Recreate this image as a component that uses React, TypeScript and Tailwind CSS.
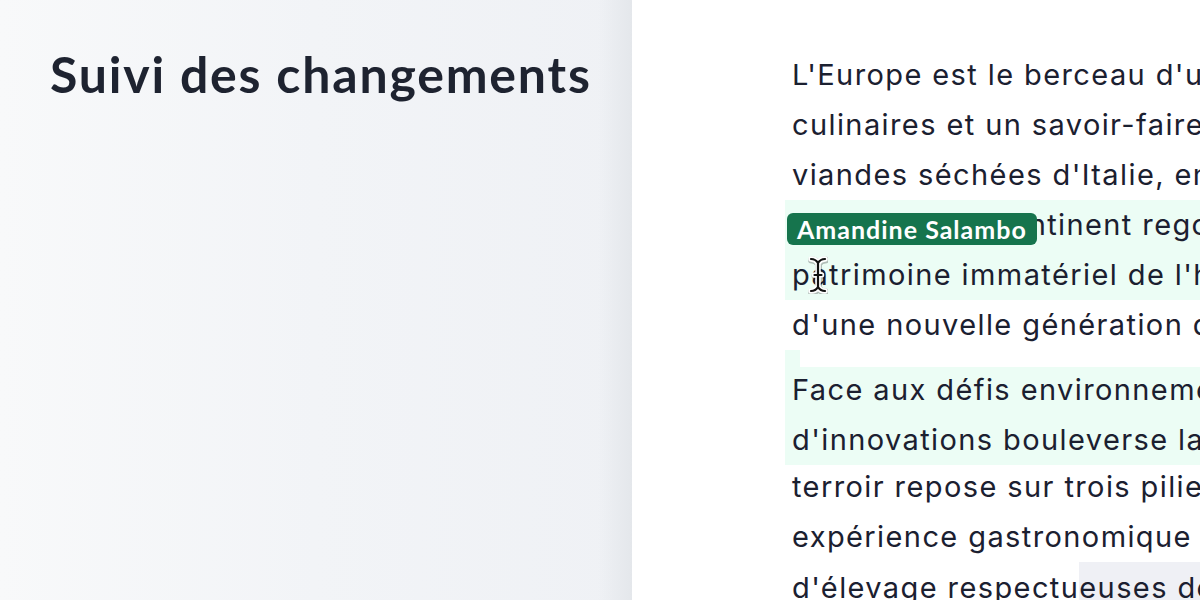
import React from "react"

function IBeam() {
  const d =
    "M3 3 C6.5 3 8.5 4.5 10 7 C11.5 4.5 13.5 3 17 3 M10 7 L10 31 M3 35 C6.5 35 8.5 33.5 10 31 C11.5 33.5 13.5 35 17 35 M6.5 19 L13.5 19"
  return (
    <svg width="20" height="38" viewBox="0 0 20 38" className="absolute left-[808px] top-[256px]">
      <path d={d} fill="none" stroke="rgba(0,0,0,0.25)" strokeWidth="7" strokeLinecap="round" transform="translate(0.5,1)" />
      <path d={d} fill="none" stroke="#ffffff" strokeWidth="5.5" strokeLinecap="round" />
      <path d={d} fill="none" stroke="#111111" strokeWidth="2.2" strokeLinecap="round" />
    </svg>
  )
}

function Line({ children }: { children: React.ReactNode }) {
  return <div className="h-[50px] leading-[50px] whitespace-nowrap pl-[7px]">{children}</div>
}

export default function App() {
  return (
    <div className="relative flex w-[1200px] h-[600px] overflow-hidden bg-white">
      {/* Left panel */}
      <div className="relative w-[632px] h-full flex-shrink-0 bg-gradient-to-r from-[#f8f9fa] via-[#f2f4f7] to-[#eff1f5]">
        <h1
          className="pt-[42px] pl-[50px] text-[50px] leading-[64px] font-bold text-[#1e2330] tracking-[1.8px]"
          style={{ fontFamily: "Lato, 'Open Sans', sans-serif" }}
        >
          Suivi des changements
        </h1>
        <div className="absolute right-0 top-0 h-full w-[34px] bg-gradient-to-r from-transparent to-[#e4e7eb]" />
      </div>

      {/* Document */}
      <div
        className="relative flex-1 pt-[50px] pl-[153px] text-[29px] tracking-[1.4px] text-[#1b2030]"
        style={{ fontFamily: "Inter, 'Liberation Sans', sans-serif" }}
      >
        <div>
          <Line>L'Europe est le berceau d'une richesse gastronomique incomparable, fruit de traditions</Line>
          <Line>culinaires et un savoir-faire transmis de génération en génération. Des fromages de France</Line>
          <Line>viandes séchées d'Italie, en passant par les vins d'Espagne, chaque région</Line>
          <div className="relative bg-[#ecfdf5] py-[3px] -my-[3px] bg-clip-content">
            <Line>d'Europe : le continent regorge de produits d'exception reconnus au</Line>
            <Line>patrimoine immatériel de l'humanité, qui attirent l'attention</Line>
            <div
              className="absolute left-[2px] top-[16px] h-[32px] rounded-[6px] bg-[#16744d] px-[10px] text-[25px] leading-[32px] font-bold text-white tracking-[1px]"
              style={{ fontFamily: "Lato, 'Open Sans', sans-serif" }}
            >
              Amandine Salambo
            </div>
          </div>
          <Line>d'une nouvelle génération de gourmets.</Line>
        </div>
        <div className="flex h-[15px]">
          <div className="w-[15px] bg-[#ecfdf5]" />
        </div>
        <div>
          <div className="flex h-[5px]">
            <div className="w-[15px] bg-[#ecfdf5]" />
          </div>
          <div className="bg-[#ecfdf5] -mt-[3px] pt-[3px] h-[98px]">
            <div className="-mt-[5px]">
              <Line>Face aux défis environnementaux, une vague</Line>
              <Line>d'innovations bouleverse la production. Le</Line>
            </div>
          </div>
          <div className="-mt-[3px]">
            <Line>terroir repose sur trois piliers : authenticité,</Line>
            <Line>expérience gastronomique et pratiques</Line>
            <Line>
              d'élevage respectu<span className="bg-[#eff0f5] inline-block leading-[50px] pt-[1px]">euses de l'environnement</span>
            </Line>
          </div>
        </div>
      </div>
      <IBeam />
    </div>
  )
}
